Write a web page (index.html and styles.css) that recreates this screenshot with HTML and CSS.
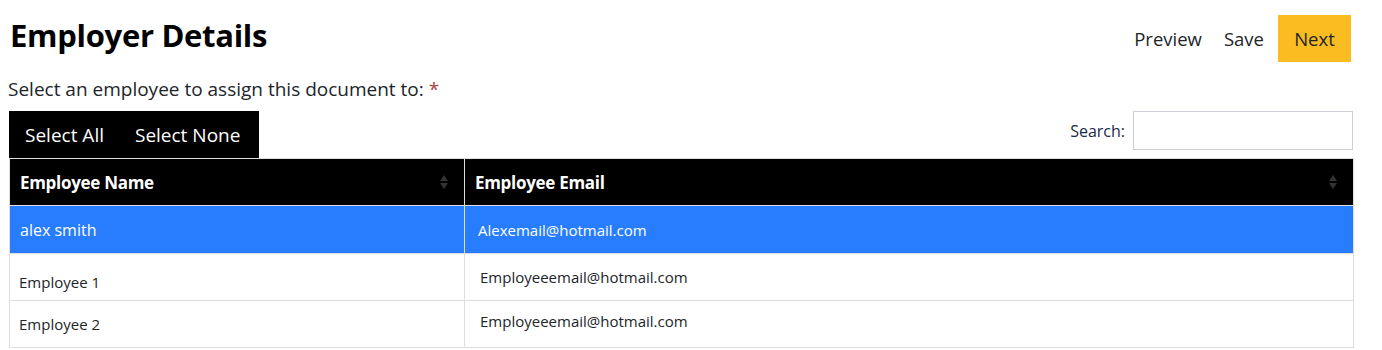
FILE: index.html
```html
<!DOCTYPE html>
<html lang="en">
<head>
    <meta charset="UTF-8">
    <meta name="viewport" content="width=device-width, initial-scale=1.0">
    <title>Employer Details</title>
    <link rel="stylesheet" href="styles.css">
</head>
<body>
    <div class="page">
        <header class="top-bar">
            <h1>Employer Details</h1>
            <nav class="actions">
                <button class="link-btn">Preview</button>
                <button class="link-btn">Save</button>
                <button class="next-btn">Next</button>
            </nav>
        </header>

        <p class="prompt">Select an employee to assign this document to: <span class="required">*</span></p>

        <div class="toolbar">
            <div class="select-group">
                <button class="select-btn">Select All</button>
                <button class="select-btn">Select None</button>
            </div>
            <label class="search">
                Search:
                <input type="text" class="search-input">
            </label>
        </div>

        <table class="employee-table">
            <thead>
                <tr>
                    <th class="col-name">Employee Name
                        <svg class="sort" width="8" height="18" viewBox="0 0 8 18"><path d="M4 2 L8 8 L0 8 Z" fill="#333"/><path d="M0 10 L8 10 L4 16 Z" fill="#333"/></svg>
                    </th>
                    <th class="col-email">Employee Email
                        <svg class="sort" width="8" height="18" viewBox="0 0 8 18"><path d="M4 2 L8 8 L0 8 Z" fill="#333"/><path d="M0 10 L8 10 L4 16 Z" fill="#333"/></svg>
                    </th>
                </tr>
            </thead>
            <tbody>
                <tr class="selected">
                    <td class="name">alex smith</td>
                    <td class="email">Alexemail@hotmail.com</td>
                </tr>
                <tr class="first">
                    <td class="name">Employee 1</td>
                    <td class="email">Employeeemail@hotmail.com</td>
                </tr>
                <tr>
                    <td class="name">Employee 2</td>
                    <td class="email">Employeeemail@hotmail.com</td>
                </tr>
            </tbody>
        </table>
    </div>
</body>
</html>
```

FILE: styles.css
```css
* {
    margin: 0;
    padding: 0;
    box-sizing: border-box;
}

body {
    font-family: "Open Sans", "Noto Sans", Arial, sans-serif;
    color: #212529;
    background-color: #fff;
}

.page {
    padding: 0 29px 0 8px;
}

button {
    font-family: inherit;
    border: none;
    background: none;
    cursor: pointer;
}

.top-bar {
    display: flex;
    justify-content: space-between;
    align-items: flex-start;
    height: 78px;
}

h1 {
    font-size: 31px;
    font-weight: 700;
    color: #000;
    margin: 14px 0 0 2px;
    letter-spacing: -0.3px;
}

.actions {
    display: flex;
    align-items: center;
    margin-top: 15px;
    margin-right: 2px;
}

.link-btn {
    font-size: 18.5px;
    color: #212529;
    padding: 0 11px;
    height: 47px;
}

.next-btn {
    font-size: 18.5px;
    color: #212529;
    background-color: #fbbc22;
    height: 47px;
    width: 73px;
    margin-left: 3px;
}

.prompt {
    font-size: 19px;
    color: #212529;
    line-height: 22px;
    margin-top: 0;
}

.required {
    color: #a94442;
}

.toolbar {
    display: flex;
    justify-content: space-between;
    align-items: flex-start;
    margin-top: 11px;
    padding-left: 1px;
}

.select-group {
    display: flex;
    background-color: #000;
    height: 47px;
    width: 250px;
}

.select-btn {
    color: #fff;
    font-size: 19px;
    padding: 0 15px 0 16px;
    height: 47px;
}

.search {
    display: flex;
    align-items: center;
    gap: 8px;
    font-size: 16px;
    color: #1b2a4a;
}

.search-input {
    width: 220px;
    height: 39px;
    border: 1px solid #ccd0d6;
    outline: none;
}

.employee-table {
    width: 1345px;
    margin-left: 1px;
    border-collapse: collapse;
    table-layout: fixed;
}

.employee-table th,
.employee-table td {
    border: 1px solid #dcdee3;
    text-align: left;
}

.employee-table th {
    background-color: #000;
    color: #fff;
    font-size: 17px;
    font-weight: 700;
    height: 47px;
    padding: 0 10px;
    position: relative;
    letter-spacing: -0.3px;
}

.col-name {
    width: 455px;
}

.sort {
    position: absolute;
    right: 16px;
    top: 14px;
}

.employee-table td {
    height: 47px;
    font-size: 15px;
    color: #212529;
}

.employee-table td.name {
    padding: 0 10px 0 9px;
}

.employee-table td.email {
    padding: 0 10px 7px 15px;
}

.employee-table tr.first td.name {
    padding-top: 9px;
}

.employee-table tr.first td.email {
    padding-bottom: 1px;
}

.employee-table tr.selected td {
    background-color: #287dfe;
    color: #fff;
    height: 48px;
}

.employee-table tr.selected td.name {
    font-size: 16px;
    padding: 0 10px;
}

.employee-table tr.selected td.email {
    padding: 0 10px 0 13px;
}
```
